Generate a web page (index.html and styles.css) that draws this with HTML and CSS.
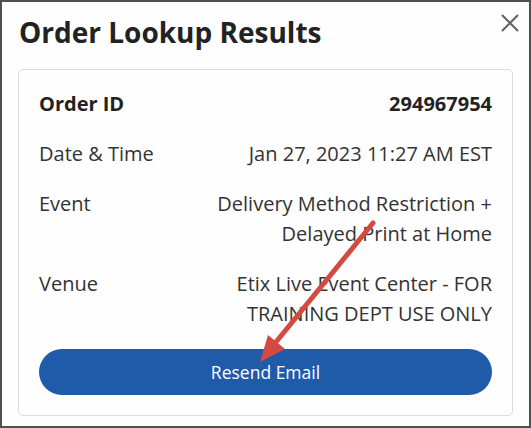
FILE: index.html
```html
<!DOCTYPE html>
<html lang="en">
<head>
    <meta charset="UTF-8">
    <meta name="viewport" content="width=device-width, initial-scale=1.0">
    <title>Order Lookup Results</title>
    <link rel="stylesheet" href="styles.css">
</head>
<body>

<div class="modal">
    <div class="modal-header">
        <h1>Order Lookup Results</h1>
        <button class="close-btn" aria-label="Close">
            <svg width="20" height="20" viewBox="0 0 20 20">
                <path d="M2 2 L18 18 M18 2 L2 18" stroke="#666" stroke-width="2.2" fill="none"/>
            </svg>
        </button>
    </div>

    <div class="result-card">
        <div class="result-row">
            <span class="label strong">Order ID</span>
            <span class="value strong">294967954</span>
        </div>
        <div class="result-row">
            <span class="label">Date &amp; Time</span>
            <span class="value">Jan 27, 2023 11:27 AM EST</span>
        </div>
        <div class="result-row">
            <span class="label">Event</span>
            <span class="value">Delivery Method Restriction + Delayed Print at Home</span>
        </div>
        <div class="result-row">
            <span class="label">Venue</span>
            <span class="value">Etix Live Event Center - FOR TRAINING DEPT USE ONLY</span>
        </div>
        <button class="resend-btn">Resend Email</button>
    </div>
</div>

<!-- annotation arrow drawn over the screenshot -->
<svg class="annotation" width="531" height="428" viewBox="0 0 531 428">
    <line x1="373" y1="223" x2="276" y2="342" stroke="#d24a40" stroke-width="5" stroke-linecap="round"/>
    <polygon points="260,362 285,349 268,335" fill="#d24a40"/>
</svg>

</body>
</html>
```

FILE: styles.css
```css
body {
    margin: 0;
    padding: 0;
    position: relative;
    font-family: "Open Sans", Arial, sans-serif;
    background: #fff;
}
.modal {
    width: 531px;
    height: 428px;
    box-sizing: border-box;
    border: 2px solid #505050;
    background: #fefefe;
    padding: 0 16px 0 16px;
}
.modal-header {
    display: flex;
    justify-content: space-between;
    align-items: flex-start;
    height: 67px;
}
.modal-header h1 {
    margin: 11px 0 0 1px;
    font-size: 28px;
    font-weight: 700;
    line-height: 38px;
    color: #222;
}
.close-btn {
    background: none;
    border: none;
    padding: 0;
    margin: 11px -7px 0 0;
    cursor: pointer;
}
.result-card {
    border: 1px solid #dcdcdc;
    border-radius: 5px;
    padding: 19px 20px 20px 20px;
}
.result-row {
    display: flex;
    justify-content: space-between;
    align-items: flex-start;
    margin-bottom: 20px;
    font-size: 20px;
    line-height: 30px;
    color: #333;
}
.result-row .value {
    text-align: right;
    max-width: 290px;
}
.result-row .strong {
    font-weight: 700;
    color: #222;
}
.resend-btn {
    display: block;
    width: 100%;
    height: 46px;
    margin-top: 20px;
    border: none;
    border-radius: 23px;
    background-color: #1f5ba9;
    color: #fff;
    font-family: "Open Sans", Arial, sans-serif;
    font-size: 17.5px;
    cursor: pointer;
}
.annotation {
    position: absolute;
    top: 0;
    left: 0;
    pointer-events: none;
}
```
